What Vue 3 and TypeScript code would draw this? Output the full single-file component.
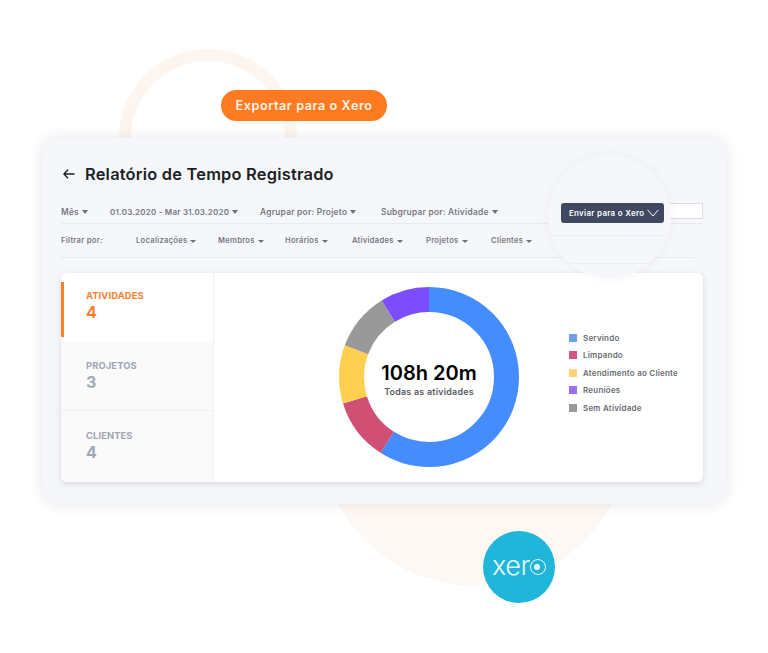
<template>
  <div class="stage">
    <!-- decorative shapes behind the card -->
    <div class="ring"></div>
    <div class="blob"></div>

    <button class="export-pill">Exportar para o Xero</button>

    <section class="report">
      <header class="title-row">
        <svg class="back" width="12" height="10" viewBox="0 0 12 10" fill="none">
          <path d="M11.5 5H1M5 .8 .9 5 5 9.2" stroke="#1d1f26" stroke-width="1.4" />
        </svg>
        <h1>Relatório de Tempo Registrado</h1>
      </header>

      <div class="row-one">
        <span v-for="g in groupBy" :key="g.label" class="opt" :style="{ width: g.width + 'px' }">
          {{ g.label }}<i class="caret big"></i>
        </span>
        <span class="search"></span>
      </div>

      <div class="row-two">
        <span v-for="f in filters" :key="f.label" class="opt small" :style="{ width: f.width + 'px' }">
          {{ f.label }}<i v-if="f.caret" class="caret"></i>
        </span>
      </div>

      <div class="panel">
        <aside class="tabs">
          <div v-for="(t, i) in tabs" :key="t.name" class="tab" :class="{ active: i === 0 }">
            <div class="tab-name">{{ t.name }}</div>
            <div class="tab-num">{{ t.count }}</div>
          </div>
        </aside>

        <div class="chart-area">
          <div class="donut">
            <svg width="184" height="184" viewBox="0 0 184 184">
              <circle
                v-for="s in segments"
                :key="s.name"
                cx="92"
                cy="92"
                r="77.5"
                fill="none"
                pathLength="360"
                stroke-width="25"
                :stroke="s.color"
                :stroke-dasharray="s.sweep + ' ' + (360 - s.sweep)"
                :stroke-dashoffset="-s.start"
                transform="rotate(-90 92 92)"
              />
            </svg>
            <div class="donut-label">
              <strong>108h 20m</strong>
              <span>Todas as atividades</span>
            </div>
          </div>

          <ul class="legend">
            <li v-for="l in legend" :key="l.name">
              <i :style="{ background: l.color }"></i>{{ l.name }}
            </li>
          </ul>
        </div>
      </div>
    </section>

    <!-- magnifier over the send button -->
    <div class="lens">
      <div class="lens-line one"></div>
      <div class="lens-line two"></div>
      <button class="send">
        Enviar para o Xero
        <svg width="12" height="8" viewBox="0 0 12 8" fill="none">
          <path d="M.6.8 6 7 11.4.8" stroke="#fff" stroke-width="1" />
        </svg>
      </button>
    </div>

    <div class="xero">
      <span>xer</span><i class="xero-o"></i>
    </div>
  </div>
</template>

<script setup lang="ts">
const groupBy = [
  { label: "Mês", width: 49 },
  { label: "01.03.2020 - Mar 31.03.2020", width: 150 },
  { label: "Agrupar por: Projeto", width: 121 },
  { label: "Subgrupar por: Atividade", width: 130 },
];

const filters = [
  { label: "Filtrar por:", width: 75, caret: false },
  { label: "Localizações", width: 82, caret: true },
  { label: "Membros", width: 67, caret: true },
  { label: "Horários", width: 67, caret: true },
  { label: "Atividades", width: 74, caret: true },
  { label: "Projetos", width: 65, caret: true },
  { label: "Clientes", width: 60, caret: true },
];

const tabs = [
  { name: "ATIVIDADES", count: 4 },
  { name: "PROJETOS", count: 3 },
  { name: "CLIENTES", count: 4 },
];

const segments = [
  { name: "blue", color: "#458cff", start: 0, sweep: 212.6 },
  { name: "red", color: "#cf4f75", start: 212.6, sweep: 40.2 },
  { name: "yellow", color: "#ffcf50", start: 252.8, sweep: 37.8 },
  { name: "gray", color: "#999999", start: 290.6, sweep: 37.7 },
  { name: "purple", color: "#7c4dff", start: 328.3, sweep: 31.7 },
];

const legend = [
  { name: "Servindo", color: "#6f9ff0" },
  { name: "Limpando", color: "#d4567f" },
  { name: "Atendimento ao Cliente", color: "#ffd27a" },
  { name: "Reuniões", color: "#9b6ff5" },
  { name: "Sem Atividade", color: "#999999" },
];
</script>

<style>
html,
body {
  margin: 0;
  background: #fff;
}
</style>

<style scoped>
.stage {
  position: relative;
  width: 768px;
  height: 653px;
  overflow: hidden;
  padding: 138px 0 0 42px;
  box-sizing: border-box;
  background: #fff;
  font-family: "Inter", "Noto Sans", sans-serif;
}

.ring {
  position: absolute;
  left: 119px;
  top: 49px;
  width: 178px;
  height: 178px;
  box-sizing: border-box;
  border: 12px solid #fdf6f0;
  border-radius: 50%;
}

.blob {
  position: absolute;
  left: 320px;
  top: 276px;
  width: 310px;
  height: 310px;
  border-radius: 50%;
  background: #fdf8f3;
}

.export-pill {
  position: absolute;
  left: 221px;
  top: 90px;
  width: 166px;
  height: 31px;
  border: 0;
  border-radius: 16px;
  background: #ff7a21;
  color: #fff3e6;
  font: 600 12.6px "Inter", sans-serif;
  letter-spacing: 0.58px;
  z-index: 2;
}

.report {
  position: relative;
  width: 685px;
  height: 366px;
  box-sizing: border-box;
  padding: 25px 24px 0 19px;
  background: #f6f7fb;
  border-radius: 18px;
  box-shadow: 0 0 14px rgba(60, 60, 70, 0.13);
}

.title-row {
  display: flex;
  align-items: center;
  gap: 10px;
  height: 22px;
  margin-left: 2px;
}

.title-row h1 {
  margin: 0;
  font-size: 16.4px;
  font-weight: 600;
  color: #1d1f26;
  letter-spacing: 0.22px;
}

.row-one {
  display: flex;
  align-items: center;
  height: 23px;
  margin-top: 15px;
  border-bottom: 1px solid #e9eaef;
  position: relative;
}

.row-two {
  display: flex;
  align-items: center;
  height: 33px;
  margin-right: 8px;
  border-bottom: 1px solid #e9eaef;
}

.opt {
  flex: none;
  font-size: 8.3px;
  font-weight: 600;
  color: #777882;
  letter-spacing: 0.28px;
  white-space: nowrap;
}

/* digits run wide in this face, so the date range is tightened */
.row-one .opt:nth-child(2) {
  font-size: 8px;
  letter-spacing: 0.22px;
}

.opt.small {
  font-size: 7.6px;
}

.caret {
  display: inline-block;
  margin-left: 3px;
  vertical-align: 0.5px;
  border-left: 3px solid transparent;
  border-right: 3px solid transparent;
  border-top: 3.5px solid #6f7079;
}

.caret.big {
  border-left-width: 3.6px;
  border-right-width: 3.6px;
  border-top-width: 4.4px;
}

.search {
  position: absolute;
  right: 0;
  top: 3px;
  width: 60px;
  height: 16px;
  box-sizing: border-box;
  background: #fff;
  border: 1px solid #dcdde2;
}

.panel {
  display: flex;
  height: 209px;
  margin-top: 15px;
  background: #fff;
  border-radius: 6px;
  overflow: hidden;
  box-shadow: 0 2px 6px rgba(60, 60, 70, 0.16);
}

.tabs {
  flex: none;
  width: 153px;
  box-sizing: border-box;
  border-right: 1px solid #f1f1f3;
}

.tab {
  position: relative;
  height: 69px;
  box-sizing: border-box;
  padding: 18px 0 0 25px;
  background: #fafafa;
  border-bottom: 1px solid #f0f0f2;
  color: #a2a6b4;
}

.tab:last-child {
  height: 71px;
  padding-top: 19px;
  border-bottom: 0;
}

.tab.active {
  padding-top: 17px;
  background: #fff;
  border-bottom: 0;
  color: #fd7f2d;
}

.tab.active::before {
  content: "";
  position: absolute;
  left: 0;
  top: 9px;
  width: 3px;
  height: 55px;
  background: #fd7f2d;
}

.tab-name {
  font-size: 9.4px;
  font-weight: 700;
  line-height: 12px;
  letter-spacing: 0.1px;
}

.tab-num {
  font-size: 16px;
  font-weight: 700;
  line-height: 20px;
}

.chart-area {
  flex: 1;
  display: flex;
  align-items: center;
  padding: 0 0 1px 123px;
}

.donut {
  position: relative;
  width: 184px;
  height: 184px;
  flex: none;
}

.donut svg {
  display: block;
}

.donut-label {
  position: absolute;
  inset: 0;
  display: flex;
  flex-direction: column;
  align-items: center;
  justify-content: center;
  padding-top: 3px;
  box-sizing: border-box;
}

.donut-label strong {
  font-size: 20px;
  line-height: 26px;
  color: #000;
  font-weight: 600;
}

.donut-label span {
  font-size: 8.9px;
  line-height: 12px;
  font-weight: 600;
  color: #555761;
  letter-spacing: 0.25px;
}

.legend {
  list-style: none;
  margin: -9px 0 0 48px;
  padding: 0;
}

.legend li {
  display: flex;
  align-items: center;
  height: 17.5px;
  font-size: 7.95px;
  font-weight: 600;
  color: #686a72;
  letter-spacing: 0.25px;
  white-space: nowrap;
}

.legend i {
  width: 8px;
  height: 8px;
  margin-right: 6px;
}

.lens {
  position: absolute;
  left: 548px;
  top: 155px;
  width: 123px;
  height: 123px;
  border-radius: 50%;
  background: #f6f7fb;
  box-shadow: 0 0 10px rgba(60, 60, 70, 0.05);
}

.lens-line {
  position: absolute;
  left: 3px;
  right: 3px;
  height: 1px;
  background: #eceef3;
}

.lens-line.one {
  top: 80px;
}

.lens-line.two {
  top: 108px;
  left: 18px;
  right: 18px;
}

.send {
  position: absolute;
  left: 13px;
  top: 48px;
  width: 103px;
  height: 20px;
  display: flex;
  align-items: center;
  justify-content: flex-start;
  gap: 3px;
  padding: 0 0 0 8px;
  box-sizing: border-box;
  border: 0;
  border-radius: 3px;
  background: #3f4860;
  color: #fff;
  font: 600 7.9px "Inter", sans-serif;
  letter-spacing: 0.32px;
}

.xero {
  position: absolute;
  left: 483px;
  top: 531px;
  width: 72px;
  height: 72px;
  border-radius: 50%;
  background: #1fb6d9;
  display: flex;
  align-items: center;
  justify-content: center;
  color: #eefafd;
  z-index: 2;
}

.xero span {
  font: 300 27px/1 "Inter", sans-serif;
  letter-spacing: -0.4px;
  margin-top: -3px;
}

.xero-o {
  position: relative;
  width: 16px;
  height: 16px;
  box-sizing: border-box;
  border: 1.5px solid #eefafd;
  border-radius: 50%;
}

.xero-o::after {
  content: "";
  position: absolute;
  left: 3.5px;
  top: 3.5px;
  width: 6px;
  height: 6px;
  border-radius: 50%;
  background: #eefafd;
}
</style>
